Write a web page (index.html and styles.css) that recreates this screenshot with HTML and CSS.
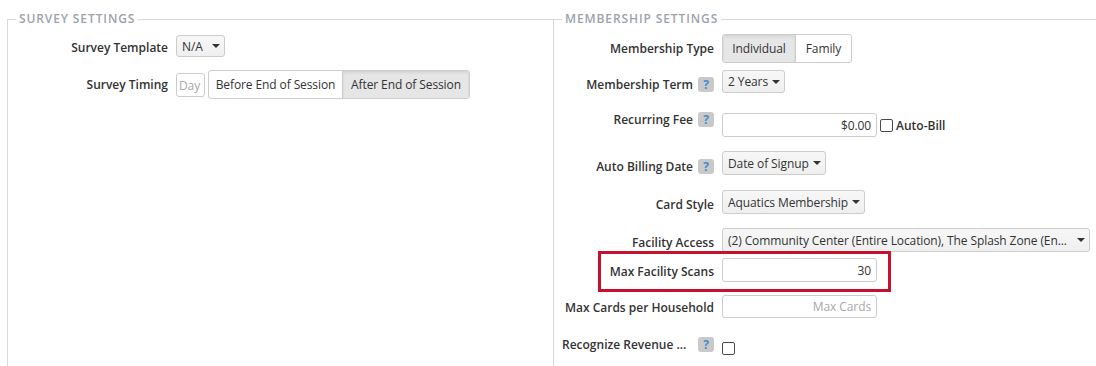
FILE: index.html
```html
<!DOCTYPE html>
<html lang="en">
<head>
<meta charset="utf-8">
<title>Settings</title>
<link rel="stylesheet" href="styles.css">
</head>
<body>
<div class="page">
  <fieldset class="section section-survey">
    <legend>Survey Settings</legend>
    <div class="row row-template">
      <div class="label label-pad-4">Survey Template</div>
      <div class="select select-22 w-template"><span>N/A</span><span class="caret"></span></div>
    </div>
    <div class="row row-timing">
      <div class="label label-pad-6">Survey Timing</div>
      <input class="input input-day" type="text" placeholder="Day">
      <div class="btn-group btn-group-timing">
        <div class="btn w-before">Before End of Session</div>
        <div class="btn active w-after">After End of Session</div>
      </div>
    </div>
  </fieldset>

  <fieldset class="section section-membership">
    <legend>Membership Settings</legend>
    <div class="row row-type">
      <div class="label label-pad-6">Membership Type</div>
      <div class="btn-group">
        <div class="btn active w-individual">Individual</div>
        <div class="btn w-family">Family</div>
      </div>
    </div>
    <div class="row row-term">
      <div class="label label-pad-6">Membership Term <span class="help">?</span></div>
      <div class="select select-23 w-term"><span>2 Years</span><span class="caret"></span></div>
    </div>
    <div class="row row-fee">
      <div class="label label-pad-2">Recurring Fee <span class="help">?</span></div>
      <div class="control-inline control-offset-2">
        <input class="input" type="text" value="$0.00">
        <input class="check check-fee" type="checkbox">
        <span class="check-label">Auto-Bill</span>
      </div>
    </div>
    <div class="row row-billing">
      <div class="label label-pad-7">Auto Billing Date <span class="help">?</span></div>
      <div class="select w-billing"><span>Date of Signup</span><span class="caret"></span></div>
    </div>
    <div class="row row-card">
      <div class="label label-pad-6">Card Style</div>
      <div class="select w-card"><span>Aquatics Membership</span><span class="caret"></span></div>
    </div>
    <div class="row row-facility">
      <div class="label label-pad-6">Facility Access</div>
      <div class="select w-facility"><span class="select-text">(2) Community Center (Entire Location), The Splash Zone (En...</span><span class="caret"></span></div>
    </div>
    <div class="row row-scans highlight">
      <div class="label label-pad-5">Max Facility Scans</div>
      <input class="input" type="text" value="30">
    </div>
    <div class="row row-cards">
      <div class="label label-pad-4">Max Cards per Household</div>
      <input class="input input-23" type="text" placeholder="Max Cards">
    </div>
    <div class="row row-revenue">
      <div class="label label-left label-pad-1"><span class="label-trunc">Recognize Revenue ...</span><span class="help">?</span></div>
      <input class="check check-revenue" type="checkbox">
    </div>
  </fieldset>
</div>
</body>
</html>
```

FILE: styles.css
```css
html, body {
  margin: 0;
  padding: 0;
  background: #ffffff;
}

body {
  font-family: "Open Sans", "Segoe UI", "Liberation Sans", sans-serif;
  font-size: 12px;
  letter-spacing: -0.1px;
  color: #333333;
}

.page {
  display: flex;
  height: 366px;
  overflow: hidden;
}

.section {
  margin: 9px 0 0;
  padding: 0;
  border: 0;
  border-top: 1px solid #d8d8d8;
  border-left: 1px solid #d8d8d8;
  min-width: 0;
  box-sizing: border-box;
}

.section-survey {
  margin-left: 7px;
  width: 546px;
  flex: none;
}

.section-membership {
  flex: 1;
}

.section legend {
  margin-left: 8px;
  padding: 0 3px;
  font-size: 12px;
  font-weight: 600;
  line-height: 20px;
  letter-spacing: 0.9px;
  text-transform: uppercase;
  color: #9ba3ab;
}

.row {
  display: flex;
  align-items: flex-start;
}

.row-template { margin-top: 6px; }
.row-timing { margin-top: 13px; }
.row-type { margin-top: 5px; }
.row-term { margin-top: 7px; }
.row-fee { margin-top: 15px; }
.row-billing { margin-top: 14px; }
.row-card { margin-top: 14px; }
.row-facility { margin-top: 14px; }
.row-scans { margin-top: 6px; }
.row-cards { margin-top: 13px; }
.row-revenue { margin-top: 17px; }

.label {
  width: 160px;
  flex: none;
  margin-right: 8px;
  display: flex;
  justify-content: flex-end;
  align-items: flex-start;
  font-size: 12px;
  font-weight: 600;
  letter-spacing: 0;
  line-height: 18px;
  white-space: nowrap;
  color: #333333;
}

.label-pad-1 { padding-top: 1px; }
.label-pad-2 { padding-top: 2px; }
.label-pad-4 { padding-top: 4px; }
.label-pad-5 { padding-top: 5px; }
.label-pad-6 { padding-top: 6px; }
.label-pad-7 { padding-top: 7px; }

.label-left {
  justify-content: flex-start;
  padding-left: 8px;
  box-sizing: border-box;
}

.label-trunc {
  width: 131px;
  flex: none;
}

.help {
  display: inline-block;
  width: 16px;
  height: 15px;
  margin-top: 1px;
  margin-left: 5px;
  border-radius: 3px;
  background: #c9c9c9;
  color: #3d8ed4;
  font-size: 12px;
  font-weight: 700;
  line-height: 15px;
  text-align: center;
}

.select {
  display: flex;
  align-items: center;
  height: 24px;
  box-sizing: border-box;
  border: 1px solid #cccccc;
  border-radius: 3px;
  background: linear-gradient(#f7f7f7, #efefef);
  padding: 0 4px 0 5px;
  color: #333333;
  white-space: nowrap;
  overflow: hidden;
}

.select-22 { height: 22px; }
.select-23 { height: 23px; }

.select-text {
  overflow: hidden;
}

.caret {
  width: 0;
  height: 0;
  margin-left: auto;
  border-left: 4px solid transparent;
  border-right: 4px solid transparent;
  border-top: 4px solid #333333;
  flex: none;
}

.w-template { width: 49px; }
.w-term { width: 63px; }
.w-billing { width: 104px; }
.w-card { width: 143px; }
.w-facility { width: 368px; }

.input {
  width: 155px;
  height: 24px;
  box-sizing: border-box;
  margin: 0;
  border: 1px solid #cccccc;
  border-radius: 3px;
  padding: 0 5px;
  font: inherit;
  letter-spacing: -0.1px;
  color: #333333;
  text-align: right;
  background: #ffffff;
  outline: none;
}

.input::placeholder {
  color: #a8a8a8;
}

.input-23 { height: 23px; }

.input-day {
  width: 29px;
  margin-top: 3px;
  padding: 0 2px;
  text-align: left;
}

.btn-group {
  display: flex;
  height: 29px;
  box-sizing: border-box;
  border: 1px solid #cccccc;
  border-radius: 3px;
  overflow: hidden;
  background: #ffffff;
}

.btn-group-timing {
  margin-left: 3px;
}

.btn {
  display: flex;
  align-items: center;
  justify-content: center;
  white-space: nowrap;
  color: #333333;
}

.btn + .btn {
  border-left: 1px solid #cccccc;
}

.btn.active {
  background: #e6e6e6;
  box-shadow: inset 0 2px 3px rgba(0, 0, 0, 0.08);
}

.w-before { width: 133px; }
.w-after { width: 126px; }
.w-individual { width: 72px; }
.w-family { width: 55px; }

.control-inline {
  display: flex;
  align-items: center;
}

.control-offset-2 { margin-top: 4px; }

.check {
  appearance: none;
  -webkit-appearance: none;
  width: 13px;
  height: 13px;
  margin: 0;
  box-sizing: border-box;
  border: 1px solid #4a4a4a;
  border-radius: 2px;
  background: #ffffff;
}

.check-fee {
  margin-left: 3px;
}

.check-label {
  margin-left: 3px;
  font-weight: 600;
  letter-spacing: 0;
}

.check-revenue {
  margin-top: 7px;
}

.highlight {
  position: relative;
}

.highlight::after {
  content: "";
  position: absolute;
  left: 44px;
  top: -7px;
  width: 293px;
  height: 41px;
  box-sizing: border-box;
  border: 3px solid #c8102e;
  pointer-events: none;
}
```
